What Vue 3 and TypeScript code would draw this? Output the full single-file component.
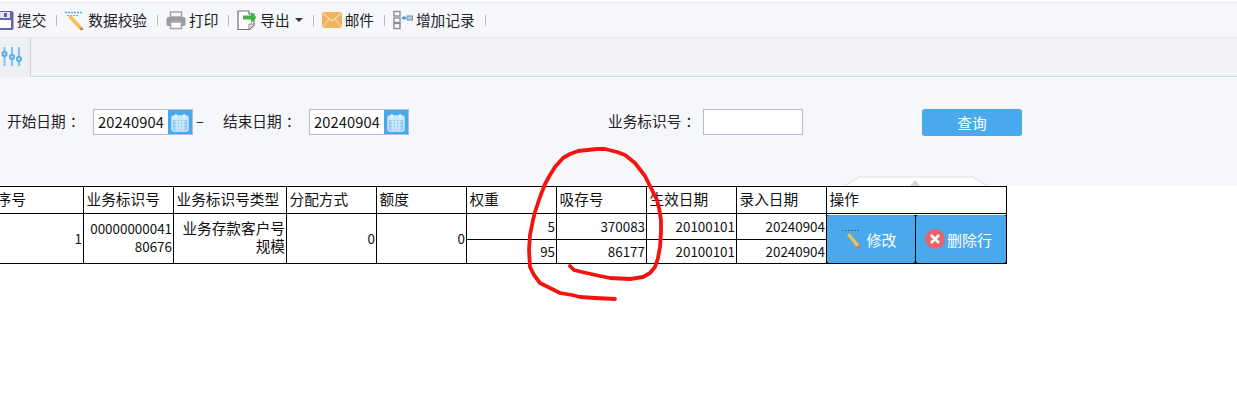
<script setup lang="ts">
interface ToolItem { label: string; icon: string; caret?: boolean }
const tools: ToolItem[] = [
  { label: '提交', icon: 'save' },
  { label: '数据校验', icon: 'pencil' },
  { label: '打印', icon: 'print' },
  { label: '导出', icon: 'export', caret: true },
  { label: '邮件', icon: 'mail' },
  { label: '增加记录', icon: 'add' },
]
const heads = ['序号', '业务标识号', '业务标识号类型', '分配方式', '额度', '权重', '吸存号', '生效日期', '录入日期']
const circle = 'M570 266 L574 270 L582 272 L600 276 L610 278 L630 279 L643 277 L650 273 L655 267 L658 258 L660 247 L661 232 L661 220 L659 208 L657 200 L650 186 L645 176 L635 163 L625 155 L617 152 L605 149 L597 149 L578 151 L570 154 L563 158 L555 167 L550 175 L545 184 L540 197 L535 212 L533 220 L530 235 L529 250 L530 267 L534 275 L540 283 L550 288 L560 293 L572 295 L580 297 L595 298 L615 299'
</script>

<template>
  <div class="page">
    <div class="top-gap"></div>
    <div class="toolbar">
      <div v-for="t in tools" :key="t.label" class="tool">
        <svg v-if="t.icon === 'save'" class="ico" viewBox="0 0 20 20">
          <rect x="0.500" y="1" width="19" height="19" rx="2" fill="#6265a8" />
          <rect x="4" y="2" width="12" height="6" fill="#e3e5f3" />
          <rect x="10" y="3" width="3" height="4" fill="#6265a8" />
          <rect x="3" y="10" width="14" height="8" fill="#fff" />
        </svg>
        <svg v-else-if="t.icon === 'pencil'" class="ico" viewBox="0 0 20 20">
          <path d="M0 2.500h17" stroke="#55a8e6" stroke-width="1.600" stroke-dasharray="2 1" />
          <path d="M2 5.500h12" stroke="#999" stroke-width="1" stroke-dasharray="2 1" />
          <path d="M3 7l3-2 11 12-3 2z" fill="#f2c14e" />
          <path d="M14 19l3-2 1.500 2.500-2 1z" fill="#ea6a4d" />
        </svg>
        <svg v-else-if="t.icon === 'print'" class="ico" viewBox="0 0 20 20">
          <rect x="4.500" y="2" width="11" height="5" fill="#fff" stroke="#a2a4a8" stroke-width="1.500" />
          <rect x="0.500" y="7" width="19" height="9" rx="2" fill="#9a9c9f" />
          <rect x="4.500" y="12" width="11" height="6.500" fill="#fff" stroke="#a2a4a8" stroke-width="1.500" />
        </svg>
        <svg v-else-if="t.icon === 'export'" class="ico" viewBox="0 0 20 20">
          <path d="M1 1h11v3h5v11l-4.500 4.500H1z" fill="#fff" stroke="#6f7072" stroke-width="1.200" />
          <path d="M12 19v-5h5" fill="#e3e3e3" stroke="#8b8b8b" />
          <path d="M6 5.500h8V2l5.500 5.500-5.500 5.500V9.500H6z" fill="#3cb44a" />
        </svg>
        <svg v-else-if="t.icon === 'mail'" class="ico" viewBox="0 0 20 20">
          <rect y="2" width="20" height="16" rx="2" fill="#efb35f" />
          <path d="M1 3.500l9 7.500 9-7.500M1 17l6-8M19 17l-6-8" fill="none" stroke="#f9dcae" stroke-width="1.200" />
        </svg>
        <svg v-else class="ico" viewBox="0 0 20 20">
          <rect x="1" y="1.500" width="6" height="4.500" fill="#fff" stroke="#8a8c90" stroke-width="1.400" />
          <rect x="1" y="8" width="6" height="4.500" fill="#fff" stroke="#8a8c90" stroke-width="1.400" />
          <rect x="1" y="13.500" width="6" height="5" fill="#fff" stroke="#8a8c90" stroke-width="1.400" />
          <path d="M8.500 8l3-2.500v5z" fill="#3f9fe6" />
          <rect x="11" y="7" width="2" height="2" fill="#3f9fe6" />
          <rect x="14" y="6" width="5.500" height="4" fill="#a9d3f0" stroke="#8a8c90" />
        </svg>
        <span class="tool-label">{{ t.label }}</span>
        <i v-if="t.caret" class="caret"></i>
      </div>
    </div>

    <div class="tabstrip">
      <div class="tab">
        <svg class="sliders" width="21" height="20" viewBox="0 0 21 20">
          <path d="M3.500 0v19M11 0v19M18 0v19" stroke="#86c5f2" stroke-width="2.200" />
          <g fill="#a9d6f6" stroke="#4ea9ec" stroke-width="1.600">
            <circle cx="3.500" cy="7" r="2.200" />
            <circle cx="11" cy="10" r="2.200" />
            <circle cx="18" cy="12" r="2.200" />
          </g>
        </svg>
      </div>
    </div>

    <div class="form">
      <div class="group start">
        <span class="lbl">开始日期<em>：</em></span>
        <div class="datebox">
          <span class="dateval">20240904</span>
          <span class="calbtn">
            <svg width="18" height="19" viewBox="0 0 18 19">
              <rect x="1" y="3" width="16" height="15" rx="2" fill="#8cc8f3" stroke="#d6ecfb" stroke-width="1.400" />
              <rect x="1.500" y="3.500" width="15" height="3.500" fill="#cfe8fa" />
              <path d="M5 1v4M13 1v4" stroke="#eef7fe" stroke-width="1.500" />
              <path d="M3 9h12M3 12h12M3 15h12M6 7v10M9 7v10M12 7v10" stroke="#e6f3fd" />
            </svg>
          </span>
        </div>
        <span class="dash">–</span>
      </div>
      <div class="group end">
        <span class="lbl">结束日期<em>：</em></span>
        <div class="datebox">
          <span class="dateval">20240904</span>
          <span class="calbtn">
            <svg width="18" height="19" viewBox="0 0 18 19">
              <rect x="1" y="3" width="16" height="15" rx="2" fill="#8cc8f3" stroke="#d6ecfb" stroke-width="1.400" />
              <rect x="1.500" y="3.500" width="15" height="3.500" fill="#cfe8fa" />
              <path d="M5 1v4M13 1v4" stroke="#eef7fe" stroke-width="1.500" />
              <path d="M3 9h12M3 12h12M3 15h12M6 7v10M9 7v10M12 7v10" stroke="#e6f3fd" />
            </svg>
          </span>
        </div>
      </div>
      <div class="group biz">
        <span class="lbl">业务标识号<em>：</em></span>
        <div class="textbox"></div>
      </div>
      <button class="query">查询</button>
      <div class="collapse">
        <svg width="142" height="10" viewBox="0 0 142 10">
          <path d="M0 10L14 1H128L142 10" fill="#fff" stroke="#e6e7ea" stroke-width="1.500" />
          <path d="M65 10l5-6 5 6z" fill="#d3d5d8" />
        </svg>
      </div>
    </div>

    <div class="tablewrap">
      <table class="grid">
        <colgroup>
          <col class="c-seq" />
          <col v-for="n in 9" :key="n" class="c" :class="`c${n}`" />
        </colgroup>
        <thead>
          <tr class="head">
            <th v-for="h in heads" :key="h">{{ h }}</th>
            <th>操作</th>
          </tr>
        </thead>
        <tbody>
          <tr class="r1">
            <td rowspan="2" class="num digits">1</td>
            <td rowspan="2" class="num digits tight">00000000041<br />80676</td>
            <td rowspan="2" class="num tight">业务存款客户号<br />规模</td>
            <td rowspan="2" class="num digits">0</td>
            <td rowspan="2" class="num digits">0</td>
            <td class="num digits">5</td>
            <td class="num digits">370083</td>
            <td class="num digits">20100101</td>
            <td class="num digits">20240904</td>
            <td rowspan="2" class="opcell">
              <div class="ops">
                <button class="op edit">
                  <svg width="20" height="20" viewBox="0 0 20 20">
                    <path d="M0 1.500h18" stroke="#5d6670" stroke-width="1.200" stroke-dasharray="2 1" />
                    <path d="M5 6l2.500-2 10 12-3 2z" fill="#f2c14e" />
                    <path d="M14.500 18l3-2 1 3-2 1z" fill="#ea6a4d" />
                  </svg>
                  修改
                </button>
                <button class="op del">
                  <span class="xmark">
                    <svg width="12" height="12" viewBox="0 0 12 12"><path d="M2 2l8 8M10 2l-8 8" stroke="#fff" stroke-width="2.600" /></svg>
                  </span>
                  删除行
                </button>
              </div>
            </td>
          </tr>
          <tr class="r2">
            <td class="num digits">95</td>
            <td class="num digits">86177</td>
            <td class="num digits">20100101</td>
            <td class="num digits">20240904</td>
          </tr>
        </tbody>
      </table>
    </div>

    <svg class="scribble" width="1237" height="410" viewBox="0 0 1237 410">
      <path :d="circle" fill="none" stroke="#f5130f" stroke-width="3.800" stroke-linejoin="round" stroke-linecap="round" />
    </svg>
  </div>
</template>

<style>
html, body { margin: 0; padding: 0; background: #fff; }
</style>

<style scoped>
.page {
  position: relative;
  width: 1237px;
  height: 410px;
  overflow: hidden;
  background: #fff;
  color: #222;
  font-family: "Noto Sans CJK SC", "Liberation Sans", sans-serif;
  font-size: 14.67px;
}
.top-gap { height: 2px; background: #fff; border-bottom: 1px solid #e9eaee; }
.toolbar {
  height: 34px;
  display: flex;
  align-items: center;
  margin-left: -6px;
  background: #f6f7fb;
  border-bottom: 1px solid #e6e8ee;
}
.tool {
  display: flex;
  align-items: center;
  gap: 3px;
  padding-right: 11px;
  margin-right: 8px;
  position: relative;
}
.tool::after {
  content: "";
  position: absolute;
  right: 0;
  top: 5px;
  width: 1px;
  height: 11px;
  background: #b9bbc0;
}
.ico { width: 20px; height: 20px; flex: none; }
.tool-label { line-height: 20px; white-space: nowrap; }
.caret {
  width: 0;
  height: 0;
  margin-left: 2px;
  border-left: 4px solid transparent;
  border-right: 4px solid transparent;
  border-top: 4px solid #333;
}
.tabstrip {
  height: 38px;
  background: #f3f4f8;
  border-bottom: 1px solid #d9dbe2;
}
.tab {
  width: 31px;
  height: 39px;
  background: #eff0f2;
  border-right: 1px solid #cfd1d8;
  display: flex;
  align-items: center;
  padding-left: 1px;
  box-sizing: border-box;
}
.sliders { flex: none; margin-bottom: 1px; }
.form {
  position: relative;
  height: 109px;
  background: #f6f7fa;
  display: flex;
  align-items: flex-start;
  padding-top: 32px;
  box-sizing: border-box;
}
.group { display: flex; align-items: center; height: 26px; }
.start { margin-left: 7px; }
.end { margin-left: 18px; }
.biz { margin-left: 199px; }
.lbl { white-space: nowrap; padding-bottom: 3px; }
.lbl em { font-style: normal; display: inline-block; transform: translateX(4px); }
.start .lbl { width: 86px; }
.end .lbl { width: 86px; }
.biz .lbl { width: 95px; }
.datebox {
  width: 100px;
  height: 26px;
  box-sizing: border-box;
  border: 1px solid #b8bccd;
  background: #fff;
  display: flex;
  align-items: center;
  justify-content: space-between;
}
.dateval { padding-left: 4px; color: #111; letter-spacing: 0.1px; padding-bottom: 1px; }
.calbtn {
  width: 24px;
  height: 24px;
  background: #4aa8ec;
  display: flex;
  align-items: center;
  justify-content: center;
}
.dash { margin-left: 3px; width: 9px; padding-bottom: 3px; }
.textbox {
  width: 100px;
  height: 26px;
  box-sizing: border-box;
  background: #fff;
  border: 1px solid #b8bccd;
}
.query {
  margin-left: 119px;
  width: 100px;
  height: 27px;
  border: 0;
  border-radius: 3px;
  background: #4aa8ec;
  color: #fff;
  font: inherit;
  padding: 0;
}
.collapse {
  position: absolute;
  left: 845px;
  bottom: 0;
  height: 10px;
  line-height: 0;
}
.tablewrap { margin-left: -7px; }
.grid {
  border-collapse: collapse;
  table-layout: fixed;
  width: 1013px;
  background: #fff;
  color: #111;
}
.grid th, .grid td {
  border: 1px solid #000;
  padding: 0 1px;
  font-weight: 400;
  line-height: 23px;
  overflow: hidden;
  white-space: nowrap;
}
.grid th {
  text-align: left;
  padding: 0 0 2px 2.500px;
  height: 26px;
  line-height: 24px;
  box-sizing: border-box;
}
.grid .num { text-align: right; }
.grid .digits { font-size: 13.400px; }
.grid .tight { line-height: 18px; padding-bottom: 3px; }
.c-seq { width: 90px; }
.c1 { width: 90px; }
.c2 { width: 113px; }
.c3, .c4, .c5, .c6, .c7, .c8 { width: 90px; }
.c9 { width: 180px; }
.r1 td { height: 25px; }
.r2 td { height: 23px; }
.grid .opcell { padding: 1px 0 0; height: 48px; }
.ops { display: flex; gap: 1px; height: 48px; background: #000; }
.op {
  border: 0;
  border-radius: 2px;
  background: #4aa8ec;
  color: #fff;
  font: inherit;
  font-size: 15px;
  padding: 0;
  display: flex;
  align-items: center;
  justify-content: center;
  gap: 3px;
}
.edit { flex: none; width: 88px; gap: 4px; padding-right: 3px; }
.del { flex: 1 1 0; padding-right: 5px; gap: 2px; }
.xmark {
  width: 20px;
  height: 20px;
  border-radius: 50%;
  background: #e8636c;
  display: flex;
  align-items: center;
  justify-content: center;
}
.scribble { position: absolute; left: 0; top: 0; pointer-events: none; }
</style>
